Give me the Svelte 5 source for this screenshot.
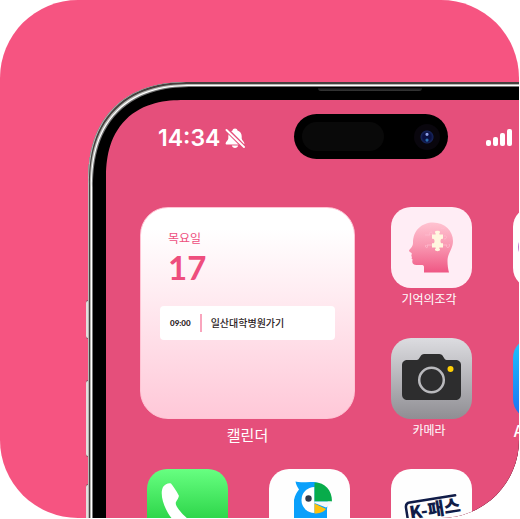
<script>
  const day = { weekday: '목요일', date: 17 };
  const events = [{ time: '09:00', title: '일산대학병원가기' }];
</script>

<main class="stage">
  <div class="phone">
    <span class="side-button action"></span>
    <span class="side-button volume-up"></span>
    <span class="side-button volume-down"></span>
    <span class="speaker"></span>

    <div class="screen">
      <header class="status">
        <div class="clock">
          <time>14:34</time>
          <svg class="bell" viewBox="0 0 20 20" role="img" aria-label="무음">
            <path d="M10 .5C8.500 .5 7.700 1.400 7.500 2.400 4.600 3.400 3.300 5.600 3.300 8.200V10.500C3.300 12.400 .6 13.600 .6 15.400 .6 16 1 16.500 1.800 16.500H18.200C19 16.500 19.400 16 19.400 15.400 19.400 13.600 16.700 12.400 16.700 10.500V8.200C16.700 5.600 15.400 3.400 12.500 2.400 12.300 1.400 11.500 .5 10 .5ZM6.800 17.600H13.200C12.800 19.100 11.600 19.900 10 19.900S7.200 19.100 6.800 17.600Z" fill="#fff" />
            <path d="M1.500 1.500 19 19" stroke="#e54f7b" stroke-width="4.400" />
            <path d="M1.500 2 19 19" stroke="#fff" stroke-width="1.900" stroke-linecap="round" />
          </svg>
        </div>
        <div class="island">
          <span class="sensor"></span>
          <span class="lens"></span>
        </div>
        <div class="signal" role="img" aria-label="신호 세기">
          <i class="bar one"></i><i class="bar two"></i><i class="bar three"></i><i class="bar four"></i>
        </div>
      </header>

      <div class="home">
        <section class="widget">
          <div class="calendar">
            <p class="weekday">{day.weekday}</p>
            <p class="date">{day.date}</p>
            {#each events as event}
              <div class="event">
                <time>{event.time}</time>
                <span class="divider"></span>
                <span>{event.title}</span>
              </div>
            {/each}
          </div>
          <h2 class="widget-name">캘린더</h2>
        </section>

        <button class="app">
          <span class="tile memory">
            <svg viewBox="0 0 81 81">
              <defs>
                <linearGradient id="head" x1="0" y1="0" x2="0" y2="1">
                  <stop offset="0" stop-color="#ffc3d1" />
                  <stop offset=".45" stop-color="#f99ab3" />
                  <stop offset="1" stop-color="#ef5784" />
                </linearGradient>
              </defs>
              <path d="M22 36C22 23 31 15.500 42 15.500 54 15.500 62 24 62 34 62 42 56.500 46 56.500 54 56.500 58 57 62 58 65.500H33V60C33 58.500 32 58 30.500 58H25.500C22.500 58 21 56.500 21.300 54L21.600 52.500 20.500 51.500 21 50 20.300 49 20.800 46.500C20.500 45.500 18 45 18 43.800 18 42 22 40.500 22 36Z" fill="url(#head)" />
              <path d="M34 28H39C37 24 43 24 41 28M50 21C53 23 55 20 53 19M53 29C56 28 57 32 53 32M41 38H36C38 42 33 41 35 38M52 38H56C54 42 60 41 58 37M40 20C37 19 38 16 41 18" fill="none" stroke="#ffbed0" stroke-width=".8" />
              <path d="M41 27.500H44.500C45.500 26.500 43.500 26 44 24.700 44.500 23.400 48.500 23.400 49 24.700 49.500 26 47.500 26.500 48.500 27.500H52V31.800C50 31.300 49.500 32.500 49.500 34S50 36.700 52 36.200V40.500H48.500C47.500 41.500 49.500 42 49 43 48.500 44.500 44.500 44.500 44 43 43.500 42 45.500 41.500 44.500 40.500H41V36.200C43 36.700 43.500 35.500 43.500 34S43 31.300 41 31.800Z" fill="#fff7df" />
            </svg>
          </span>
          <span class="name">기억의조각</span>
        </button>

        <button class="app" aria-label="앱">
          <span class="tile white">
            <svg viewBox="0 0 81 81"><circle cx="18" cy="40" r="13" fill="#ba72c9" /></svg>
          </span>
        </button>

        <button class="app">
          <span class="tile camera">
            <svg viewBox="0 0 81 81">
              <path d="M17 22H26C28 22 28.500 19 30.500 17 31.500 16 32.500 16 34 16H47C49 16 50 16 51 17 53 19 53.500 22 55.500 22H64C68 22 70 24 70 27V56C70 60 68 62 64 62H17C13 62 11 60 11 56V27C11 24 13 22 17 22Z" fill="#2d2d2e" />
              <circle cx="40.500" cy="42" r="12.300" fill="none" stroke="#b9b9bd" stroke-width="2.500" />
              <circle cx="59.500" cy="31" r="3" fill="#ffcf05" />
            </svg>
          </span>
          <span class="name">카메라</span>
        </button>

        <button class="app">
          <span class="tile store">
            <svg viewBox="0 0 81 81"><path d="M44 20 26 54M37 20 55 54M18 48H63" stroke="#fff" stroke-width="6" stroke-linecap="round" /></svg>
          </span>
          <span class="name wide">App Store</span>
        </button>

        <button class="app" aria-label="전화">
          <span class="tile call">
            <svg viewBox="0 0 81 81">
              <path d="M16 18C18 15.500 21.500 13.500 24 14.500 26 17 29.500 22 31.800 26.500 32.300 28 30 31 29 33 27.800 35.500 31 40 36 45.500 41 50.500 45.500 53.500 48 52.500L53 49.500C57 50.500 65 55 66 58.500 66 61 63 65 59 66.500 47 68 33 59 24.500 49 16.500 39 12.500 25 16 18Z" fill="#fff" />
            </svg>
          </span>
        </button>

        <button class="app" aria-label="앵무새">
          <span class="tile white">
            <svg viewBox="0 0 81 81">
              <path d="M26.500 12.500C31 14 38 12.500 45 13 55 14 61 23 58 40V66H25V31C26 26 28 23 30 20.500 29 19 27 16 26.500 12.500Z" fill="#0aa0fb" />
              <path d="M45.500 18A13 13 0 0 0 45.500 44Z" fill="#fff" />
              <path d="M45.500 13.500C56 13.500 63 21 63 32.500H45.500Z" fill="#08ac4b" />
              <path d="M45.500 32.500H63C61 36 59 37 57 38.500L45.500 34Z" fill="#f4f8fa" />
              <path d="M45.500 34.500 57 40C54 43.500 50 44.500 45.500 44.500Z" fill="#fdc00d" />
              <circle cx="39.500" cy="29.500" r="3.200" fill="#30384a" />
            </svg>
          </span>
        </button>

        <button class="app" aria-label="K-패스">
          <span class="tile white">
            <svg viewBox="0 0 81 81">
              <g transform="rotate(-9 16 42)">
                <path d="M66 34H20C17 34 15.500 35.500 15.500 39V58" fill="none" stroke="#101c48" stroke-width="2.500" stroke-linecap="round" />
                <text x="18" y="51" class="pass">K-패스</text>
              </g>
            </svg>
          </span>
        </button>
      </div>
    </div>
  </div>
</main>

<style>
  :global(body) {
    margin: 0;
    background: #fff;
  }

  .stage {
    box-sizing: border-box;
    height: calc(100vh - 1px);
    margin-right: 1px;
    padding: 82px 0 0 88px;
    overflow: hidden;
    border-radius: 78px;
    background: #f65481;
    font-family: 'Noto Sans CJK KR', 'Noto Sans', sans-serif;
  }

  .phone {
    position: relative;
    box-sizing: border-box;
    width: 565px;
    padding: 18px;
    border-radius: 102px;
    corner-shape: superellipse(1.25);
    background: #000;
    box-shadow:
      inset 1px 0 0 #b5b9b8,
      inset 0 0 0 2px #45413f,
      inset 0 0 0 3px #b8b8b4,
      inset 0 0 0 4px #fff,
      inset 0 0 0 5px #777;
  }

  .side-button {
    position: absolute;
    left: -2px;
    width: 2px;
    border-radius: 2px 0 0 2px;
    background: #e2dfdc;
    box-shadow: 0 -1px 0 #8b5965, 0 1px 0 #8b5965;
  }

  .action { top: 219px; height: 37px; }
  .volume-up { top: 299px; height: 75px; }
  .volume-down { top: 403px; height: 75px; }

  .speaker {
    position: absolute;
    top: 6px;
    left: 230px;
    width: 104px;
    height: 3px;
    border-radius: 0 0 3px 3px;
    background: linear-gradient(#111, #383838);
  }

  .screen {
    box-sizing: border-box;
    min-height: 1100px;
    padding: 14px 41px;
    border-radius: 78px;
    corner-shape: superellipse(1.25);
    background: #e54f7b;
  }

  .status {
    display: grid;
    grid-template-columns: 1fr 154px 1fr;
    align-items: center;
    margin-bottom: 48px;
  }

  .clock {
    display: flex;
    align-items: center;
    gap: 5px;
    padding: 3px 0 0 11px;
    color: #fff;
    font: 600 23px/28px Inter, sans-serif;
  }

  .bell {
    width: 20px;
    height: 20px;
    flex: none;
  }

  .island {
    display: flex;
    align-items: center;
    justify-content: space-between;
    box-sizing: border-box;
    height: 45px;
    padding: 0 8px;
    border-radius: 23px;
    background: #000;
  }

  .sensor {
    width: 82px;
    height: 29px;
    border-radius: 15px;
    background: #090909;
  }

  .lens {
    width: 26px;
    height: 26px;
    border-radius: 50%;
    background:
      radial-gradient(circle at 50% 40%, #8da0e8 0 1px, transparent 2px),
      radial-gradient(circle at 50% 62%, #2a6fb0 0 1px, transparent 2px),
      radial-gradient(circle, #0b1042 0 4px, #16245a 6px, #09060d 7px);
  }

  .signal {
    display: flex;
    align-items: flex-end;
    gap: 2px;
    height: 17px;
    padding: 2px 0 0 38px;
  }

  .bar {
    width: 5px;
    border-radius: 2px;
    background: #fff;
  }

  .one { height: 6px; }
  .two { height: 9px; }
  .three { height: 13px; }
  .four { height: 17px; }

  .home {
    display: grid;
    grid-template-columns: repeat(4, 81px);
    grid-auto-rows: 108px;
    gap: 23px 41px;
  }

  .widget {
    grid-column: span 2;
    grid-row: span 2;
    margin: 0 -5px 0 -7px;
  }

  .calendar {
    box-sizing: border-box;
    height: 212px;
    padding: 21px 19px;
    border: 1px solid #ffc4d4;
    border-radius: 28px;
    background: linear-gradient(#fff 10%, #ffc8d8);
  }

  .weekday,
  .date {
    margin: 0 0 0 8px;
    color: #ee4e7d;
  }

  .weekday {
    font-size: 12px;
    line-height: 18px;
  }

  .date {
    margin-bottom: 19px;
    font: 700 33px/40px Lato, sans-serif;
  }

  .event {
    display: flex;
    align-items: center;
    gap: 9px;
    height: 34px;
    padding-left: 10px;
    border-radius: 4px;
    background: #fff;
    color: #2b2224;
    font-size: 10px;
    font-weight: 500;
    line-height: 14px;
  }

  .event time {
    font: 900 8px/12px Lato, sans-serif;
  }

  .divider {
    width: 2px;
    height: 18px;
    background: #f9a5bd;
  }

  .widget-name {
    margin: 5px 0 0;
    color: #fff;
    font-size: 15px;
    font-weight: 400;
    line-height: 22px;
    text-align: center;
  }

  .app {
    display: flex;
    flex-direction: column;
    align-items: center;
    gap: 2px;
    padding: 0;
    border: 0;
    background: none;
    color: #fff;
    font: 400 12px/18px 'Noto Sans CJK KR', sans-serif;
    cursor: pointer;
  }

  .tile {
    width: 81px;
    height: 81px;
    flex: none;
    overflow: hidden;
    border-radius: 20px;
  }

  .tile svg {
    display: block;
    width: 100%;
    height: 100%;
  }

  .name {
    padding-right: 5px;
    white-space: nowrap;
  }

  .wide {
    font-size: 16px;
    font-weight: 500;
  }

  .memory { background: #ffedf5; }
  .white { background: #fefefe; }
  .camera { background: linear-gradient(#dcdce0, #8f8e93); }
  .store { background: linear-gradient(#1cc8fb, #1d6ff2); }
  .call { background: linear-gradient(#67ff81, #0abc28); }

  .pass {
    fill: #101c48;
    font: 900 18px 'Noto Sans CJK KR', sans-serif;
  }
</style>
